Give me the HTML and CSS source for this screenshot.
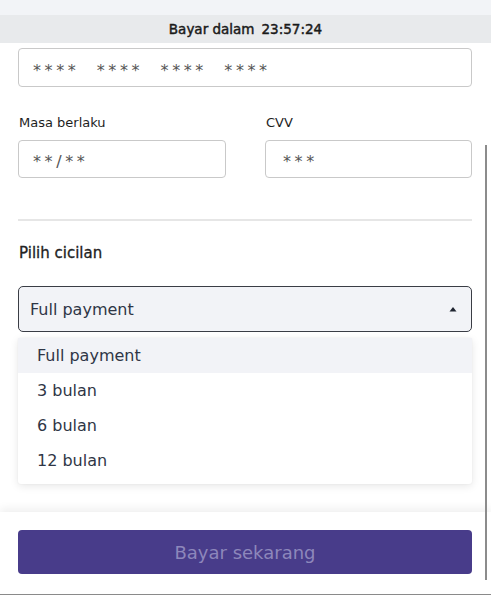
FILE: index.html
```html
<!DOCTYPE html>
<html lang="id">
<head>
<meta charset="utf-8">
<title>Pembayaran</title>
<link rel="stylesheet" href="styles.css">
</head>
<body>
<div class="frame">
  <div class="top-strip"></div>
  <div class="timer"><span>Bayar dalam</span><span class="time">23:57:24</span></div>
  <main class="content">
    <div class="input card-input">****&nbsp; ****&nbsp; ****&nbsp; ****</div>
    <div class="row">
      <div class="field">
        <label class="label">Masa berlaku</label>
        <div class="input">**/**</div>
      </div>
      <div class="field">
        <label class="label">CVV</label>
        <div class="input cvv">***</div>
      </div>
    </div>
    <hr class="divider">
    <div class="section-title">Pilih cicilan</div>
    <div class="select-wrap">
      <div class="select">
        <span>Full payment</span>
        <svg class="caret" width="8" height="6" viewBox="0 0 8 6"><path d="M0.5 5.5 L4 1 L7.5 5.5 Z" fill="#1f2430"/></svg>
      </div>
      <ul class="menu">
        <li class="menu-item active">Full payment</li>
        <li class="menu-item">3 bulan</li>
        <li class="menu-item">6 bulan</li>
        <li class="menu-item">12 bulan</li>
      </ul>
    </div>
  </main>
  <footer class="footer">
    <button class="pay-btn">Bayar sekarang</button>
  </footer>
  <div class="scrollbar"></div>
</div>
</body>
</html>
```

FILE: styles.css
```css
* { box-sizing: border-box; }
html, body { margin: 0; padding: 0; }
body {
  background: #ffffff;
  font-family: "DejaVu Sans", "Noto Sans", sans-serif;
  color: #222;
}
.frame {
  position: relative;
  width: 491px;
  height: 595px;
  overflow: hidden;
  display: flex;
  flex-direction: column;
  border-bottom: 1px solid #8a8a8a;
}
.top-strip {
  height: 15px;
  background: #f2f4f7;
}
.timer {
  height: 28px;
  background: #e8eaec;
  display: flex;
  justify-content: center;
  align-items: center;
  gap: 7px;
  font-size: 13.5px;
  -webkit-text-stroke: 0.45px #1a1a1a;
  color: #1a1a1a;
}
.content {
  flex: 1;
  padding: 5px 19px 0 18px;
  display: flex;
  flex-direction: column;
}
.input {
  height: 38px;
  border: 1px solid #c9c9c9;
  border-radius: 4px;
  display: flex;
  align-items: center;
  padding: 5px 0 0 14px;
  font-size: 16px;
  letter-spacing: 3.6px;
  color: #555;
  background: #fff;
}
.card-input { height: 39px; }
.cvv { padding-left: 17px; }
.row {
  display: grid;
  grid-template-columns: 208px 207px;
  justify-content: space-between;
  margin-top: 27px;
}
.field { display: flex; flex-direction: column; }
.label {
  font-size: 13px;
  line-height: 18px;
  color: #1e1e1e;
  margin-bottom: 8px;
  padding-left: 1px;
}
.divider {
  border: none;
  height: 2px;
  background: #e6e6e6;
  margin: 41px 0 0;
}
.section-title {
  font-size: 15px;
  -webkit-text-stroke: 0.3px #222;
  color: #222;
  margin-top: 22px;
  line-height: 20px;
  padding-left: 1px;
}
.select-wrap {
  position: relative;
  margin-top: 23px;
}
.select {
  height: 46px;
  border: 1.5px solid #3a3d45;
  border-radius: 5px;
  background: #f2f3f7;
  display: flex;
  align-items: center;
  justify-content: space-between;
  padding: 0 14px 0 11px;
  font-size: 16px;
  color: #2f3646;
}
.caret { display: block; }
.menu {
  position: absolute;
  left: 0;
  right: 0;
  top: 52px;
  margin: 0;
  padding: 0 0 6px;
  list-style: none;
  background: #fff;
  box-shadow: 0 2px 8px rgba(0,0,0,0.10), 0 0 2px rgba(0,0,0,0.06);
  border-radius: 3px;
}
.menu-item {
  height: 35px;
  display: flex;
  align-items: center;
  padding-left: 19px;
  font-size: 16px;
  color: #2f3646;
}
.menu-item.active { background: #f2f3f7; }
.footer {
  height: 82px;
  background: #fff;
  box-shadow: 0 -4px 8px rgba(0,0,0,0.06);
  padding: 18px 19px 0 18px;
  position: relative;
}
.pay-btn {
  width: 100%;
  height: 44px;
  border: none;
  border-radius: 4px;
  background: #483c8a;
  color: #8d87bb;
  font-family: inherit;
  font-size: 18px;
}
.scrollbar {
  position: absolute;
  left: 485px;
  top: 145px;
  width: 2px;
  height: 435px;
  background: #8c8c8c;
}
```
